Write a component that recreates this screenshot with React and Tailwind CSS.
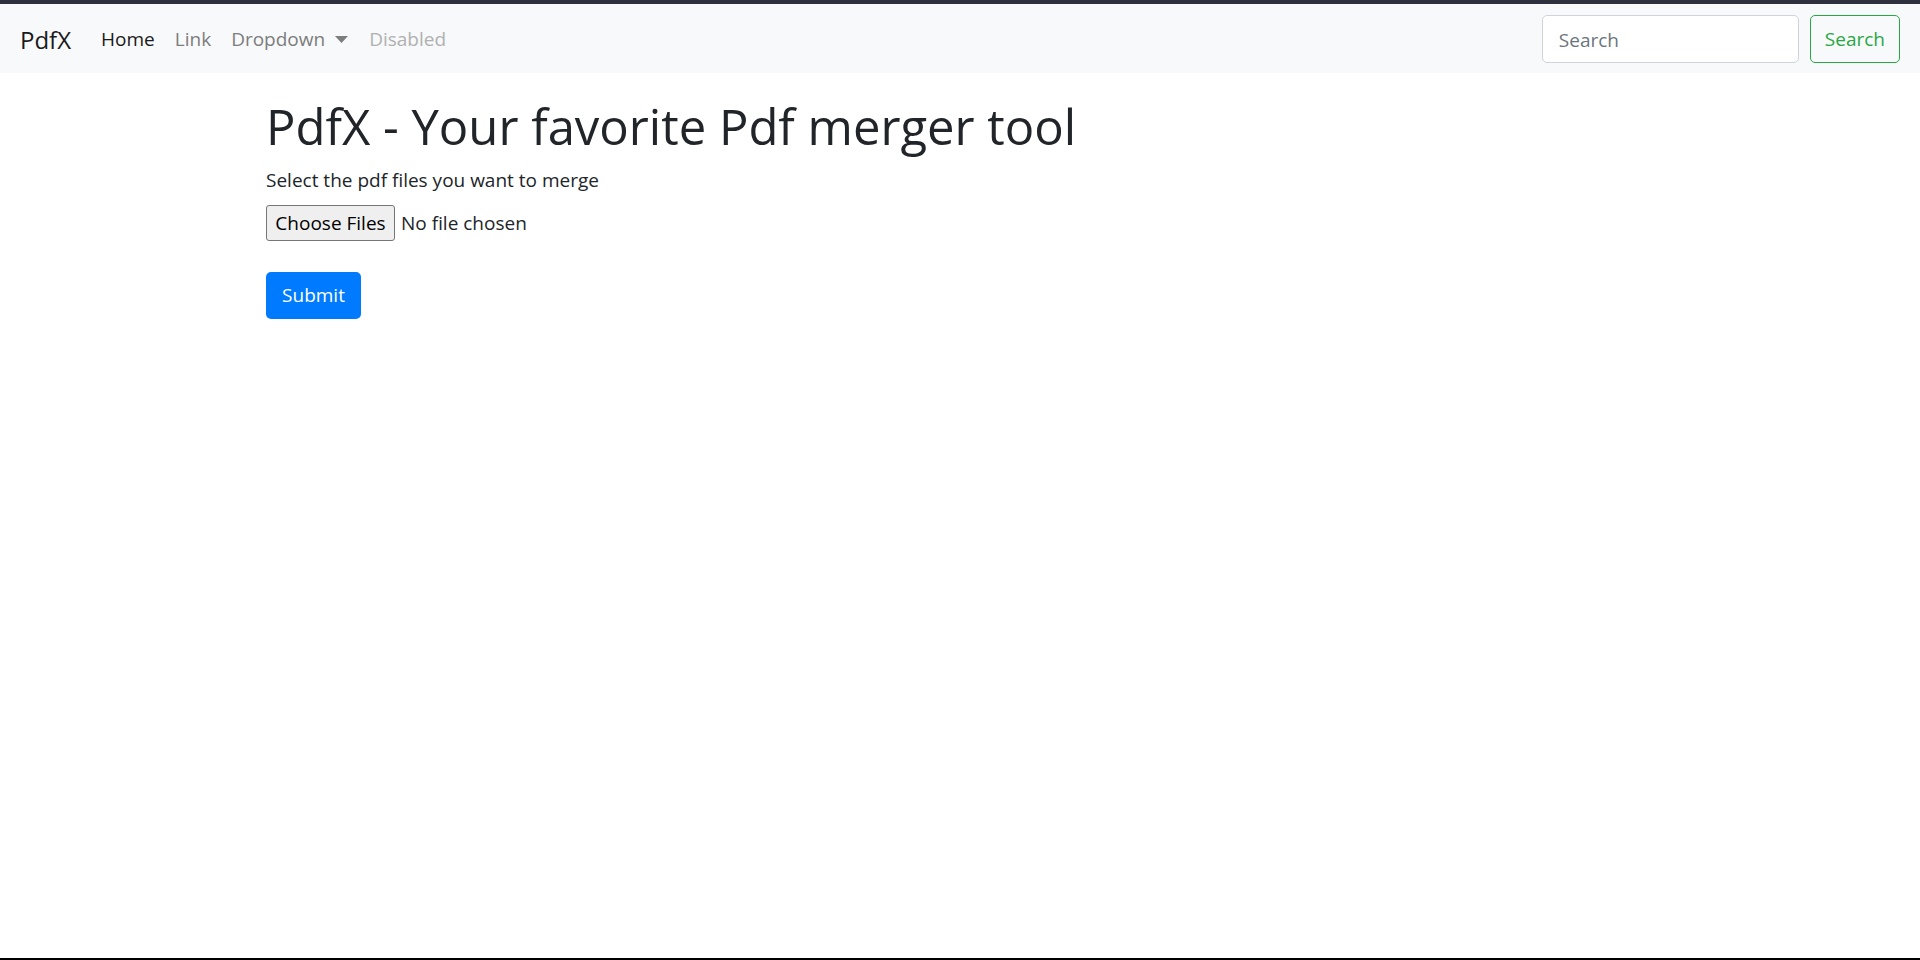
export default function App() {
  const font = { fontFamily: '"Open Sans", "Noto Sans", sans-serif' };
  return (
    <div className="min-h-[960px] flex flex-col bg-white" style={font}>
      <div className="h-[4px] bg-[#2e303d]" />
      <nav className="flex items-center justify-between bg-[#f8f9fa] h-[69px] px-[20px]">
        <div className="flex items-center pt-[2px]">
          <a className="text-[24px] text-[#1a1a1a] mr-[20px]">PdfX</a>
          <ul className="flex items-center text-[19px]">
            <li className="px-[10px] text-[#1a1a1a]">Home</li>
            <li className="px-[10px] text-[#7c7d7d]">Link</li>
            <li className="px-[10px] text-[#7c7d7d] flex items-center">
              Dropdown
              <svg className="ml-[10px]" width="13" height="8" viewBox="0 0 13 8">
                <path d="M0 0 L13 0 L6.5 7 Z" fill="#7c7d7d" />
              </svg>
            </li>
            <li className="px-[11px] text-[#b0b1b1]">Disabled</li>
          </ul>
        </div>
        <form className="flex items-center gap-[11px]">
          <input
            placeholder="Search"
            className="w-[257px] h-[48px] border border-[#ced4da] rounded-[5px] bg-white px-[16px] pt-[2px] text-[19px] text-[#495057] placeholder:text-[#6c757d] outline-none"
          />
          <button
            type="button"
            className="h-[48px] px-[14px] pt-[1px] border border-[#28a745] rounded-[5px] text-[19px] text-[#28a745]"
          >
            Search
          </button>
        </form>
      </nav>
      <main className="flex-1 pl-[266px] pt-[23px] text-[#212529]">
        <h1 className="text-[49px] leading-[60px] font-medium mb-[9px]">PdfX - Your favorite Pdf merger tool</h1>
        <p className="text-[19px] leading-[30px] mb-[10px]">Select the pdf files you want to merge</p>
        <div className="flex items-center h-[36px]">
          <span className="h-[36px] w-[129px] flex items-center justify-center bg-[#efefef] border border-[#767676] rounded-[3px] text-[19px] text-black">
            Choose Files
          </span>
          <span className="ml-[6px] text-[19px] text-[#212529]">No file chosen</span>
        </div>
        <button
          type="button"
          className="mt-[31px] h-[47px] w-[95px] bg-[#007bff] rounded-[5px] text-white text-[19px]"
        >
          Submit
        </button>
      </main>
      <div className="h-[2px] bg-black" />
    </div>
  );
}
